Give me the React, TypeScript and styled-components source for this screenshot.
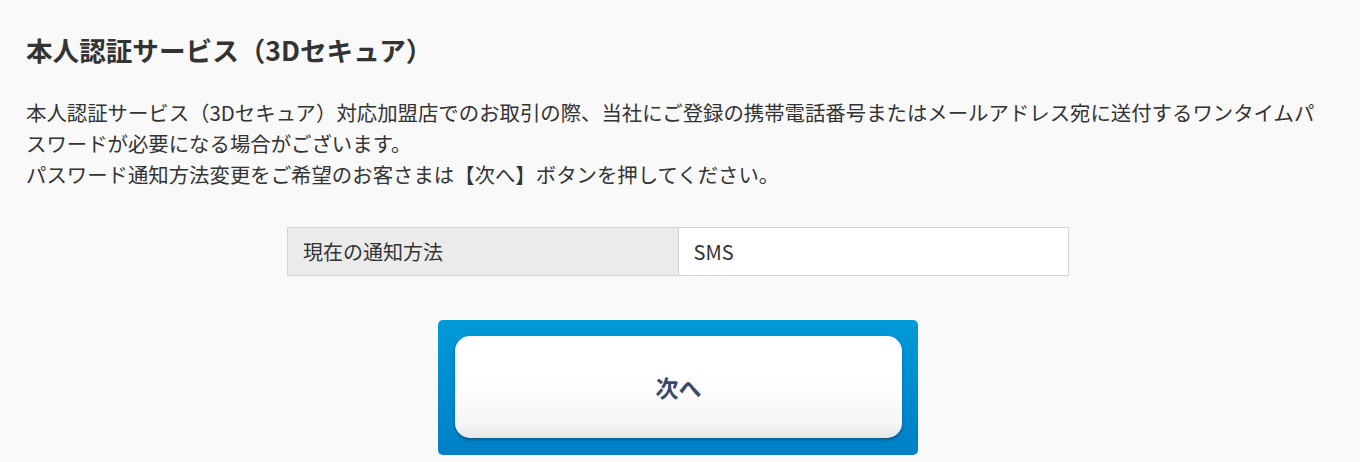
import styled, { createGlobalStyle } from 'styled-components';

const GlobalStyle = createGlobalStyle`
  html, body {
    margin: 0;
    padding: 0;
    background: #f9f9f9;
  }
  body {
    font-family: 'Noto Sans CJK JP', 'Noto Sans', sans-serif;
    color: #333;
  }
`;

const Page = styled.main`
  padding: 34px 30px 0 26px;
  height: 462px;
  box-sizing: border-box;
  overflow: hidden;
`;

const Title = styled.h2`
  margin: 0 0 31px;
  font-size: 26.6px;
  font-weight: 700;
  line-height: 32px;
  color: #333;
`;

const Lead = styled.p`
  margin: 0;
  font-size: 20.4px;
  line-height: 31px;
  color: #333;
`;

const InfoTable = styled.table`
  width: 782px;
  margin: 37px auto 0;
  border-collapse: collapse;
  font-size: 20px;
`;

const Cell = styled.td<{ $head?: boolean }>`
  width: 50%;
  height: 48px;
  padding: 0 15px;
  border: 1px solid #d4d4d4;
  background: ${(p) => (p.$head ? '#ebebeb' : '#fff')};
  color: #333;
  box-sizing: border-box;
`;

const ButtonFrame = styled.div`
  width: 480px;
  margin: 44px auto 0;
  padding: 16px 16px 17px 17px;
  box-sizing: border-box;
  border-radius: 5px;
  background: linear-gradient(#009ad9, #0080c6);
`;

const NextButton = styled.button`
  display: block;
  width: 100%;
  height: 102px;
  border: none;
  border-radius: 15px;
  background: linear-gradient(#ffffff 40%, #f6f6f6 85%, #e8e8e8);
  box-shadow: 0 2px 3px rgba(0, 40, 80, 0.45);
  font-family: inherit;
  font-size: 23px;
  font-weight: 700;
  color: #3c4668;
  cursor: pointer;
`;

export default function App() {
  return (
    <>
      <GlobalStyle />
      <Page>
        <Title>本人認証サービス（3Dセキュア）</Title>
        <Lead>
          本人認証サービス（3Dセキュア）対応加盟店でのお取引の際、当社にご登録の携帯電話番号またはメールアドレス宛に送付するワンタイムパスワードが必要になる場合がございます。
          <br />
          パスワード通知方法変更をご希望のお客さまは【次へ】ボタンを押してください。
        </Lead>
        <InfoTable>
          <tbody>
            <tr>
              <Cell $head>現在の通知方法</Cell>
              <Cell>SMS</Cell>
            </tr>
          </tbody>
        </InfoTable>
        <ButtonFrame>
          <NextButton type="button">次へ</NextButton>
        </ButtonFrame>
      </Page>
    </>
  );
}
